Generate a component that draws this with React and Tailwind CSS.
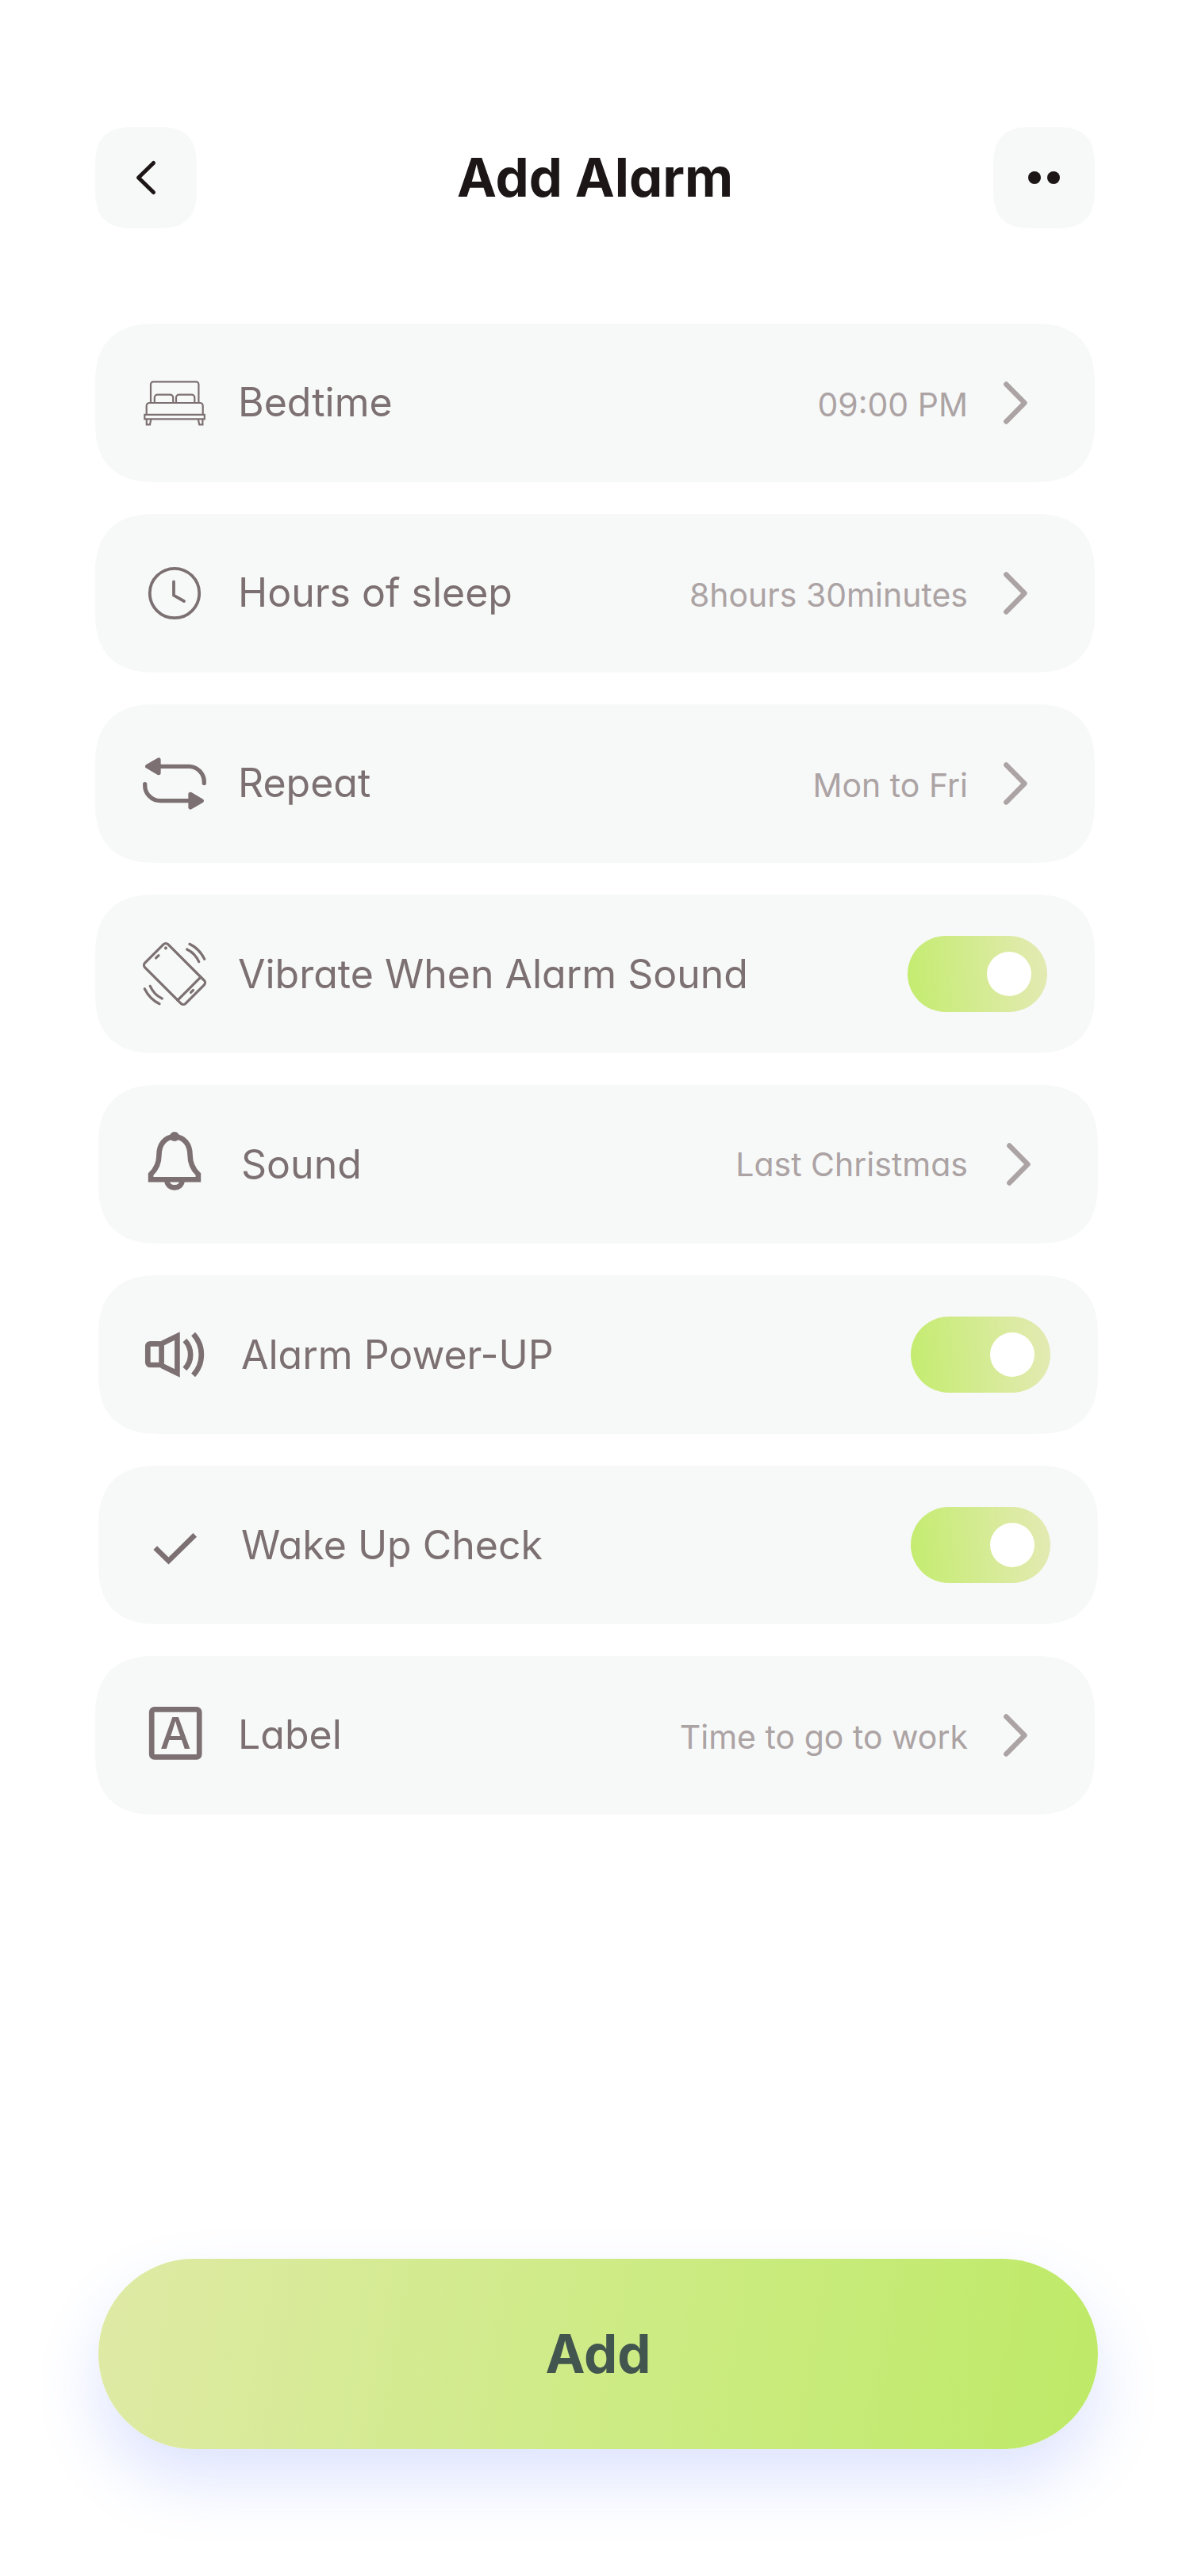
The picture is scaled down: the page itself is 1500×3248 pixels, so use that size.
import { useState } from "react";

function Icon({ children, width = 2 }) {
  return (
    <svg
      aria-hidden="true"
      viewBox="0 0 80 80"
      className="size-20 shrink-0 overflow-visible"
      fill="none"
      stroke="currentColor"
      strokeWidth={width}
    >
      {children}
    </svg>
  );
}

const icons = {
  bed: (
    <Icon width={2.2}>
      <path d="M10 40V16.5a3.2 3.2 0 0 1 3.2-3.2h54a3.2 3.2 0 0 1 3.2 3.2V40" />
      <path d="M14.8 40v-6.8a3.5 3.5 0 0 1 3.5-3.5h16.4a3.5 3.5 0 0 1 3.5 3.5V40" />
      <path d="M42 40v-6.8a3.5 3.5 0 0 1 3.5-3.5h16.3a3.5 3.5 0 0 1 3.5 3.5V40" />
      <path d="M4.7 54.8V43.5A3.5 3.5 0 0 1 8.2 40h64a3.5 3.5 0 0 1 3.5 3.5v11.3" />
      <path d="M2.3 54.8h75.5v5.5H2.3z" />
      <path d="M4.8 60.3v7h4.2l1.4-7M75.4 60.3v7h-4.2l-1.4-7" />
    </Icon>
  ),
  clock: (
    <Icon width={3.8}>
      <circle cx="40" cy="40" r="31.2" />
      <path d="M39 25.5v17.2l13 7.3" strokeLinecap="round" strokeLinejoin="round" />
    </Icon>
  ),
  repeat: (
    <Icon width={5.3}>
      <g strokeLinecap="round" strokeLinejoin="round">
        <path d="M20 18.3h38A19.4 19.4 0 0 1 77.3 37.8v1.6" />
        <path d="M60 61.7H22A19.4 19.4 0 0 1 2.7 42.2v-1.6" />
        <path d="M5.7 18.3 20 10v16.6z" fill="currentColor" />
        <path d="M74.3 61.7 60 70V53.4z" fill="currentColor" />
      </g>
    </Icon>
  ),
  vibrate: (
    <Icon width={3.2}>
      <g transform="rotate(45 40 40)" strokeLinecap="round">
        <rect x="3.8" y="19.4" width="72.4" height="41.2" rx="4" />
        <path d="M66.2 19.4v41.2M71.1 37.9v4.2M9.3 37.6v4.8" />
        <circle cx="9.1" cy="24.7" r="2" fill="currentColor" stroke="none" />
      </g>
      <g strokeLinecap="round">
        <path d="M59 2.3Q71.5 8.5 77.7 21.3M55.7 9Q66 14 70.7 24.7" />
        <path d="M21 77.7Q8.5 71.5 2.3 58.7M24.3 71Q14 66 9.3 55.3" />
      </g>
    </Icon>
  ),
  bell: (
    <Icon width={6.6}>
      <path d="M10.1 59.2v-6.5C17 46 20.4 39 20.4 28.7 20.4 15 28 5.4 40 5.4S59.6 15 59.6 28.7c0 10.3 3.4 17.3 10.3 24v6.5z" />
      <path d="M30.4 61c.6 5.6 5.1 8.4 9.6 8.4s9-2.8 9.6-8.4" />
      <circle cx="40" cy="5" r="6" fill="currentColor" stroke="none" />
    </Icon>
  ),
  volume: (
    <Icon width={6.7}>
      <rect x="6.3" y="26.3" width="17.3" height="26.7" rx="3" />
      <path d="M23.6 26.2 43.4 16.5v47L23.6 53.8" />
      <path d="M52.9 22a25.9 25.9 0 0 1 0 36M63.6 14a38.2 38.2 0 0 1 0 52" />
    </Icon>
  ),
  check: (
    <Icon width={6.6}>
      <path d="M15.7 43.7 32.5 60l33.2-32.7" />
    </Icon>
  ),
  label: (
    <Icon width={6.7}>
      <rect x="11.2" y="7.3" width="60" height="60" rx="3.3" />
      <text
        x="41.2"
        y="57"
        textAnchor="middle"
        className="text-[55px] font-medium"
        fill="currentColor"
        stroke="none"
      >
        A
      </text>
    </Icon>
  ),
};

const rows = [
  { icon: "bed", name: "Bedtime", value: "09:00 PM" },
  { icon: "clock", name: "Hours of sleep", value: "8hours 30minutes" },
  { icon: "repeat", name: "Repeat", value: "Mon to Fri" },
  { icon: "vibrate", name: "Vibrate When Alarm Sound" },
  { icon: "bell", name: "Sound", value: "Last Christmas", shifted: true },
  { icon: "volume", name: "Alarm Power-UP", shifted: true },
  { icon: "check", name: "Wake Up Check", shifted: true },
  { icon: "label", name: "Label", value: "Time to go to work" },
];

const rowBase =
  "flex min-h-50 cursor-pointer items-center rounded-[60px] bg-[#f7f9f8] pr-15 text-left text-[#7c7072] supports-[corner-shape:squircle]:rounded-[76px] supports-[corner-shape:squircle]:[corner-shape:superellipse(1.3)]";
const rowPlain = "pl-15 gap-10";
const rowShifted = "ml-1 -mr-1 pl-14 gap-11";

function Row({ row }) {
  const [on, setOn] = useState(true);
  const className = `${rowBase} ${row.shifted ? rowShifted : rowPlain}`;
  if (!row.value) {
    return (
      <label className={className}>
        {icons[row.icon]}
        <span className="flex-1 text-[50px] leading-16">{row.name}</span>
        <input
          type="checkbox"
          role="switch"
          checked={on}
          onChange={() => setOn(!on)}
          className="flex h-24 w-44 shrink-0 cursor-pointer appearance-none items-center rounded-full bg-gray-300 p-5 before:size-14 before:rounded-full before:bg-white checked:justify-end checked:bg-[linear-gradient(85deg,#c4ec6f,#e4eab4)]"
        />
      </label>
    );
  }
  return (
    <button type="button" className={className}>
      {icons[row.icon]}
      <span
        className={`flex flex-1 justify-between gap-6 ${row.shifted ? "items-center" : "items-baseline"}`}
      >
        <span className="text-[50px] leading-16">{row.name}</span>
        <span className="text-[41px] leading-16 text-[#aca3a4]">{row.value}</span>
      </span>
      <svg
        aria-hidden="true"
        viewBox="0 0 80 80"
        className="-ml-5 size-20 shrink-0 text-[#aca3a4]"
        fill="none"
        stroke="currentColor"
        strokeWidth="6.4"
        strokeLinecap="round"
        strokeLinejoin="round"
      >
        <path d="m28.3 16.5 23.2 23.5-23.2 23.5" />
      </svg>
    </button>
  );
}

const squareButton =
  "flex size-32 cursor-pointer items-center justify-center rounded-[36px] bg-[#f7f9f8] text-[#1c1617] supports-[corner-shape:squircle]:rounded-[52px] supports-[corner-shape:squircle]:[corner-shape:superellipse(1.5)]";

export default function App() {
  return (
    <main className="flex min-h-screen flex-col bg-white px-[8%] py-40 font-['Inter',sans-serif] leading-normal [font-feature-settings:'cv11']">
      <header className="flex items-center justify-between">
        <button type="button" aria-label="Back" className={squareButton}>
          <svg
            aria-hidden="true"
            viewBox="0 0 48 48"
            className="size-12"
            fill="none"
            stroke="currentColor"
            strokeWidth="5"
            strokeLinecap="round"
            strokeLinejoin="round"
          >
            <path d="M33.5 5.5 14.5 24l19 18.5" />
          </svg>
        </button>
        <h1 className="text-[67px] font-bold text-[#1c1617]">Add Alarm</h1>
        <button type="button" aria-label="More options" className={squareButton}>
          <span className="flex gap-2">
            <span className="size-4 rounded-full bg-current" />
            <span className="size-4 rounded-full bg-current" />
          </span>
        </button>
      </header>

      <section aria-label="Alarm settings" className="mt-30 mb-20 flex flex-col gap-10">
        {rows.map((row) => (
          <Row key={row.name} row={row} />
        ))}
      </section>

      <button
        type="button"
        className="mt-auto -mr-1 ml-1 h-60 shrink-0 cursor-pointer rounded-full bg-[linear-gradient(100deg,#dfeaa5,#ceeb86_50%,#beea67)] text-[67px] font-bold text-[#42554e] shadow-[0_40px_80px_rgba(90,120,250,0.2)]"
      >
        Add
      </button>
    </main>
  );
}
